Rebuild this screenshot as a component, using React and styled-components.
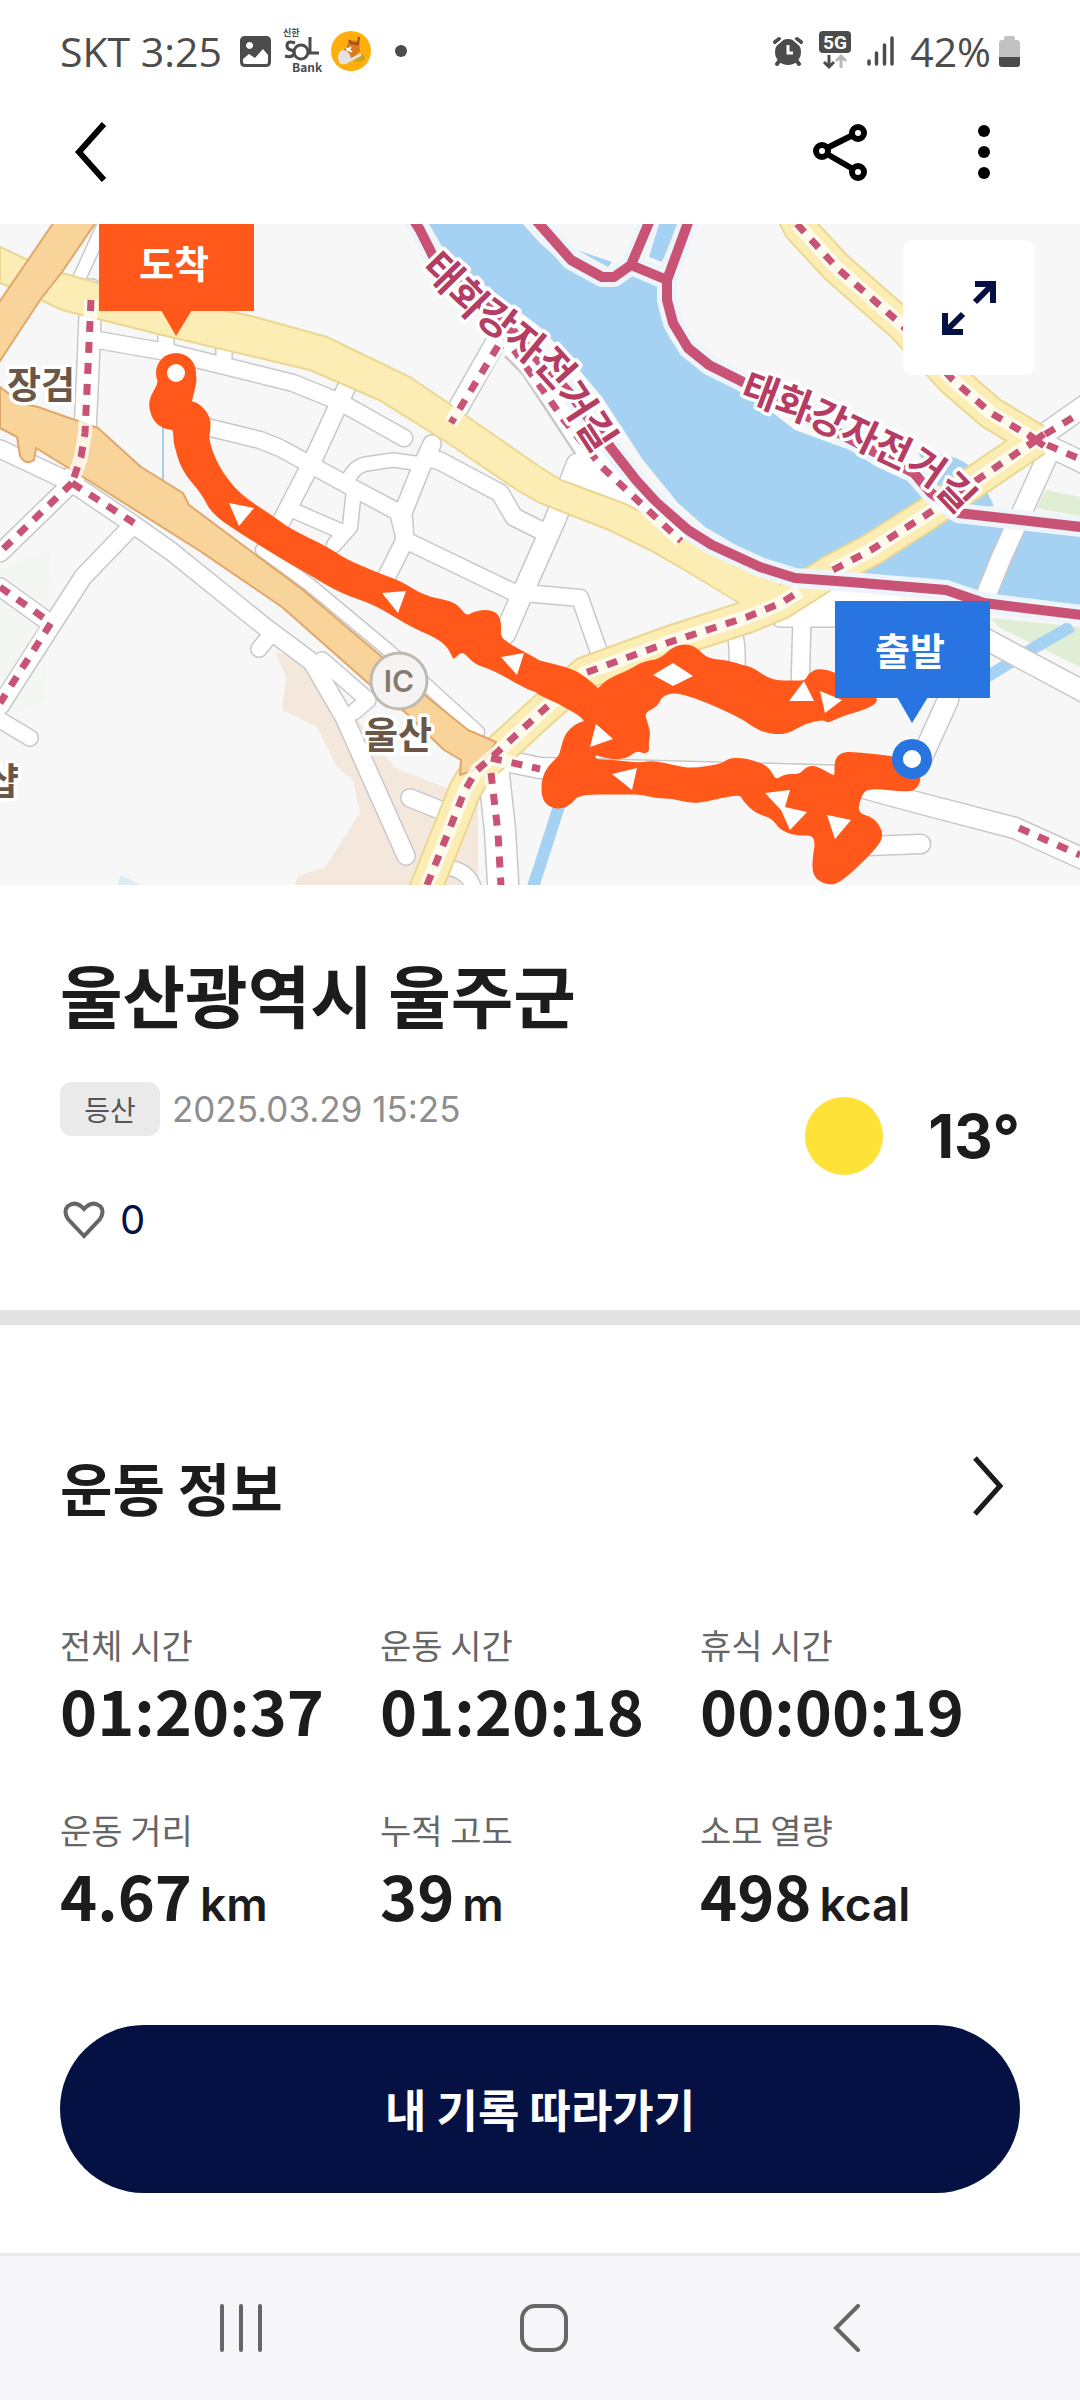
import React from "react";
import styled, { createGlobalStyle } from "styled-components";

const korean = '"Noto Sans CJK KR", sans-serif';
const latin = 'Inter, "Noto Sans CJK KR", sans-serif';

const GlobalStyle = createGlobalStyle`
  *, *::before, *::after { box-sizing: border-box; }
  body { margin: 0; background: #fff; color: #1c1c1c; font-family: ${korean}; }
  h1, h2, p, dl, dd { margin: 0; }
  svg { display: block; flex: none; }
`;

const Page = styled.div`
  min-height: 100vh;
  display: flex;
  flex-direction: column;
`;

/* ---------- status bar ---------- */

const StatusBar = styled.div`
  height: 102px;
  padding: 0 60px;
  display: flex;
  align-items: center;
  justify-content: space-between;
  color: #4c4c4c;
`;

const StatusGroup = styled.div`
  display: flex;
  align-items: center;
  gap: ${(p) => p.$gap}px;
`;

const StatusText = styled.span`
  font: 400 41px/54px "Open Sans", sans-serif;
  white-space: nowrap;
`;

const Carrier = styled(StatusText)`
  margin-right: 10px;
`;

const Dot = styled.span`
  width: 12px;
  height: 12px;
  margin-left: 16px;
  border-radius: 50%;
  background: currentColor;
`;

/* ---------- app bar ---------- */

const AppBar = styled.header`
  height: 122px;
  padding: 0 54px 22px 49px;
  display: flex;
  align-items: center;
`;

const IconButton = styled.button`
  width: 84px;
  height: 84px;
  padding: 0;
  border: 0;
  background: none;
  color: inherit;
  display: grid;
  place-items: center;
  cursor: pointer;
`;

const Actions = styled.div`
  margin-left: auto;
  display: flex;
  gap: 60px;
  color: #000;
`;

/* ---------- map ---------- */

const MapFrame = styled.section`
  position: relative;
  overflow: hidden;
  background: #f7f7f7;
`;

const MapSvg = styled.svg`
  width: 100%;
  height: auto;
`;

const ExpandButton = styled.button`
  position: absolute;
  top: 16px;
  right: 45px;
  width: 132px;
  height: 135px;
  padding: 0;
  border: 0;
  border-radius: 10px;
  background: #fff;
  color: #061143;
  display: grid;
  place-items: center;
  cursor: pointer;
`;

/* ---------- summary ---------- */

const Summary = styled.section`
  padding: 67px 60px 66px;
`;

const Title = styled.h1`
  margin-bottom: 46px;
  font-size: 68px;
  font-weight: 700;
  line-height: 84px;
`;

const SummaryRow = styled.div`
  display: flex;
  justify-content: space-between;
`;

const SummaryColumn = styled.div`
  display: flex;
  flex-direction: column;
  align-items: flex-start;
  gap: 60px;
`;

const Meta = styled.div`
  display: flex;
  align-items: center;
  gap: 12px;
`;

const Tag = styled.span`
  width: 100px;
  height: 54px;
  border-radius: 12px;
  background: #eaeaea;
  color: #555;
  font-size: 28px;
  line-height: 54px;
  text-align: center;
`;

const DateText = styled.time`
  color: #8e8e8e;
  font: 400 35px/48px ${latin};
`;

const LikeButton = styled.button`
  height: 48px;
  padding: 0 0 0 3px;
  border: 0;
  background: none;
  color: #061143;
  display: flex;
  align-items: center;
  gap: 15px;
  font: 400 40px/48px ${latin};
  cursor: pointer;
`;

const Weather = styled.div`
  height: 84px;
  margin-top: 12px;
  display: flex;
  align-items: center;
  gap: 45px;
`;

const Sun = styled.span`
  width: 78px;
  height: 78px;
  border-radius: 50%;
  background: #fee237;
`;

const Temperature = styled.span`
  font: 700 60px/84px ${latin};
`;

const Divider = styled.hr`
  width: 100%;
  height: 15px;
  margin: 0;
  border: 0;
  background: #e2e2e2;
`;

/* ---------- workout ---------- */

const Workout = styled.section`
  padding: 129px 60px 60px;
`;

const SectionHead = styled.div`
  height: 64px;
  margin-bottom: 105px;
  display: flex;
  align-items: center;
  justify-content: space-between;
`;

const SectionTitle = styled.h2`
  font-size: 57px;
  font-weight: 700;
  line-height: 64px;
`;

const MoreButton = styled(IconButton)`
  width: 64px;
  height: 64px;
`;

const Stats = styled.dl`
  display: grid;
  grid-template-columns: repeat(3, 1fr);
  row-gap: 63px;
`;

const Stat = styled.div`
  display: flex;
  flex-direction: column;
  gap: 6px;
`;

const StatLabel = styled.dt`
  color: #666;
  font-size: 34px;
  line-height: 44px;
`;

const StatValue = styled.dd`
  height: 72px;
  display: flex;
  align-items: baseline;
  gap: 8px;
  font-size: 63px;
  font-weight: 700;
  line-height: 72px;
  white-space: nowrap;
`;

const Unit = styled.span`
  font: 600 46px/72px ${latin};
`;

const FollowButton = styled.button`
  width: 100%;
  height: 168px;
  margin-top: 95px;
  border: 0;
  border-radius: 84px;
  background: #061143;
  color: #fff;
  font: 700 45px/64px ${korean};
  cursor: pointer;
`;

/* ---------- system navigation ---------- */

const SystemNav = styled.nav`
  height: 147px;
  margin-top: auto;
  padding: 0 82px 0 90px;
  border-top: 3px solid #e8e9ea;
  background: #f6f6f9;
  color: #666;
  display: grid;
  grid-template-columns: repeat(3, 1fr);
  align-items: center;
  justify-items: center;
`;

/* ---------- map data ---------- */

const streets = [
  { d: "M98 340 L172 353 L293 383 L340 402 L404 438", w: 16 },
  { d: "M166 322 V350 M224 340 V364", w: 15 },
  { d: "M207 427 L260 440 L280 448 L353 488 L398 512 L405 540 L513 592 L580 598 L600 655", w: 16 },
  { d: "M347 386 L313 460 L280 524", w: 17 },
  { d: "M432 444 L420 470 L403 513 L405 540 L384 582", w: 17 },
  { d: "M347 482 Q354 466 366 464 L393 460 L422 464", w: 13 },
  { d: "M354 490 L350 527 L334 545 M290 509 L345 533", w: 14 },
  { d: "M430 458 L440 461 L500 493 L514 517 L546 533", w: 17 },
  { d: "M577 464 L555 520 L523 592 L505 634", w: 20 },
  { d: "M91 290 L88 367 L85 433 L81 457 L72 483", w: 21 },
  { d: "M0 449 L72 483 L134 525 L172 552 L265 627 L312 662 L344 717 L406 856", w: 17 },
  { d: "M72 483 L0 553", w: 17 },
  { d: "M131 527 L83 577 L52 625 L0 706 M0 587 L50 623", w: 17 },
  { d: "M0 720 L30 738", w: 15 },
  { d: "M272 633 L259 649", w: 15 },
  { d: "M322 660 L368 700 L354 712", w: 15 },
  { d: "M410 798 L450 814", w: 17 },
  { d: "M74 290 L104 224", w: 12 },
  { d: "M262 550 L310 585 L388 650 L478 732", w: 12 },
  { d: "M494 345 L448 426", w: 19 },
  { d: "M491 758 L540 768 L843 776 L864 788 L919 803 L1015 828 L1090 862", w: 20 },
  { d: "M493 766 L500 830 L504 900", w: 30 },
  { d: "M450 868 Q474 872 476 900", w: 14 },
  { d: "M734 634 Q738 640 737 672", w: 15 },
  { d: "M802 618 L800 690 M780 618 H850", w: 17 },
  { d: "M980 636 L1090 695", w: 20 },
  { d: "M948 700 L918 766", w: 20 },
  { d: "M868 846 L921 844", w: 18 },
  { d: "M1048 455 L1002 556 L980 610", w: 19 },
  { d: "M1036 440 L1090 402 M1036 440 L1090 466", w: 20 },
];

const bikeLanes = [
  "M91 300 L88 367 L85 433 L81 457 L72 483",
  "M72 483 L0 552",
  "M72 483 L134 523",
  "M0 587 L51 623 L0 703",
  "M498 346 L451 423",
  "M514 350 L545 393 L564 420 L602 467 L681 541",
  "M491 758 L540 769",
  "M491 773 L498 833 L501 886",
  "M1019 828 L1080 855",
  "M427 885 L448 833 L465 790 L477 770 L491 758 L540 713 L585 673 L667 643 L747 617 L781 603 L800 591",
  "M833 570 L871 550 L926 515 L977 480 L1036 440 L1080 413",
  "M797 224 L836 267 L902 325 L953 380 L991 413 L1036 440 L1080 459",
];

const yellowRoads = [
  "M415 915 L448 833 L465 790 L477 770 L491 758 L540 713 L585 673 L667 643 L747 617 L781 603 L833 570 L871 550 L926 515 L977 480 L1036 440",
  "M788 205 L800 228 L836 267 L902 325 L953 380 L991 413 L1036 440",
];

const riverPaths = [
  "M411 216 L420 230 L434 258 L500 318 L572 396 L611 448 L636 480 L657 503 L688 530 L712 545 L760 567 L795 578 L850 582 L946 590 L984 603 L1090 616",
  "M534 218 L571 260 L602 277 L614 277 L631 265 L667 280 M650 220 L631 265",
  "M689 220 L667 280 L667 300 L673 323 L688 348 L709 365 L745 383 L914 473 L931 493 L958 513 L1090 528",
];

const track = [
  "160,373 159,385 152,396 150,407 155,421 166,428 174,428 175,436 175,443 183,470 203,493 213,513 241,532 286,560 306,571 341,592 375,603 410,625 434,635 448,645 454,657 454,657 463,649 475,663 492,668 517,682 540,694 560,680 540,662 527,655 507,644 499,637 500,625 497,614 486,611 474,613 466,618 457,606 448,602 424,597 399,582 379,575 344,560 327,548 289,530 272,517 238,495 217,467 207,440 209,430 209,418 200,406 190,402 190,402 195,383 195,373",
  "530,660 540,662 571,670 585,678 598,690 598,690 609,680 630,671 643,663 661,660 671,650 683,645 695,648 707,660 729,662 743,667 751,668 771,682 795,682 806,682 810,674 818,670 834,673 881,698 866,708 840,715 828,722 824,718 805,722 790,731 779,733 764,731 753,725 743,718 712,703 690,695 674,691 661,695 657,705 643,712 646,723 649,733 647,743 648,753 636,749 628,756 616,758 604,756 594,753 594,761 610,761 626,763 640,764 654,762 675,767 692,770 723,765 728,760 740,759 754,762 768,768 775,782 786,775 800,776 807,768 816,767 833,777 836,776 836,760 842,754 853,753 912,760 920,775 917,787 908,791 867,786 859,797 856,814 873,819 882,832 878,845 842,880 829,884 816,878 813,865 818,834 796,834 781,829 773,817 756,812 744,800 741,793 719,797 706,800 692,802 672,797 657,797 642,793 626,793 578,793 571,803 560,808 549,805 543,797 543,780 549,767 560,757 562,750 566,735 576,725 590,721 560,702 530,690",
];

const trackArrows = [
  "229,503 254,508 239,526",
  "382,593 406,591 398,613",
  "501,657 524,653 517,675",
  "653,675 673,663 693,676 673,686",
  "804,681 789,701 814,701",
  "820,691 842,700 825,713",
  "596,724 613,739 590,747",
  "612,774 637,768 632,790",
  "765,793 790,790 785,807 807,812 790,830 781,810",
  "827,815 851,820 835,839",
];

/* Rounds a ring of points by joining the midpoints of its edges with quadratic curves. */
function smoothRing(text) {
  const pts = text.split(" ").map((p) => p.split(",").map(Number));
  const mid = (a, b) => `${(a[0] + b[0]) / 2} ${(a[1] + b[1]) / 2}`;
  const start = mid(pts[pts.length - 1], pts[0]);
  const curves = pts.map((p, i) => `Q${p[0]} ${p[1]} ${mid(p, pts[(i + 1) % pts.length])}`);
  return `M${start} ${curves.join(" ")}Z`;
}

const MapLabel = styled.text`
  font-family: ${korean};
  font-size: ${(p) => p.$size || 37}px;
  font-weight: 600;
  fill: ${(p) => p.$color || "#6b5747"};
  stroke: #fff;
  stroke-width: 7px;
  stroke-linejoin: round;
  paint-order: stroke;
  text-anchor: ${(p) => p.$anchor || "middle"};
`;

const FlagLabel = styled.text`
  font-family: ${korean};
  font-size: 38px;
  font-weight: 700;
  fill: #fff;
  text-anchor: middle;
`;

const BadgeLabel = styled.text`
  font-family: ${latin};
  font-size: 30px;
  font-weight: 600;
  fill: #857a6d;
  text-anchor: middle;
`;

function Pin({ x, y, color, flagTop, flagHeight, label }) {
  const bottom = flagTop + flagHeight;
  return (
    <g>
      <rect x={x - 77} y={flagTop} width="155" height={flagHeight} fill={color} />
      <path d={`M${x - 15} ${bottom - 1} h31 L${x} ${bottom + 25} Z`} fill={color} />
      <circle cx={x} cy={y} r="20" fill={color} />
      <circle cx={x} cy={y} r="9" fill="#fff" />
      <FlagLabel x={x - 2} y={bottom - 33}>{label}</FlagLabel>
    </g>
  );
}

function RouteMap() {
  return (
    <MapSvg viewBox="0 224 1080 661" role="img" aria-label="울산광역시 울주군">
      <defs>
        <path id="lane-west" d="M420 269 L459 309 L491 333 L519 356 L544 377 Q556 390 564 408 L602 466" />
        <path id="lane-east" d="M739 398 L800 421 L890 464 Q932 478 972 534" />
      </defs>
      <rect y="224" width="1080" height="661" fill="#f7f7f7" />
      <path d="M0 570 L50 550 L44 700 L0 720Z" fill="#f4f6f3" />
      <path d="M275 652 L286 677 L282 710 L317 727 L337 767 L353 780 L360 813 L325 867 L298 876 L294 886 H478 V800 L395 768 L310 660Z" fill="#f4e8dd" />
      <path d="M121 875 L143 886 H117Z" fill="#deebf3" />
      <path d="M1046 490 L1080 497 V516 L1036 508Z M990 618 L1080 627 V667 L1000 628Z" fill="#e0eed5" />

      <g fill="#a5d2f3">
        <path d="M429 224 L444 250 L482 283 L540 327 L571 360 L602 397 L643 460 L678 503 L705 527 L753 555 L795 572 L902 580 L950 585 L981 597 L1080 609 V532 L953 518 L936 503 L912 483 L877 467 L850 450 L795 430 L747 393 L716 380 L692 363 L671 340 L659 310 L657 286 L633 274 L614 284 L599 284 L568 268 L540 243 L523 224Z" />
        <path d="M659 224 H678 L662 262 L649 257Z M577 250 L612 262 L608 267Z" />
        <path d="M918 452 Q960 452 978 474 L994 506 L950 510Z" />
      </g>
      <path d="M561 800 L545 850 L532 890" fill="none" stroke="#a5d2f3" strokeWidth="12" />
      <path d="M163 425 V480" stroke="#a8cfea" strokeWidth="2" />
      <path d="M1072 626 L1039 645 L985 678" fill="none" stroke="#a5d2f3" strokeWidth="12" />

      <g fill="none" strokeLinecap="round" strokeLinejoin="round">
        <path d="M506 357 L523 374 L577 456" stroke="#c8c8c8" strokeWidth="3" />
        {streets.map((s) => (
          <path key={s.d} d={s.d} stroke="#c8c8c8" strokeWidth={s.w + 3} />
        ))}
        {streets.map((s) => (
          <path key={s.d} d={s.d} stroke="#fff" strokeWidth={s.w} />
        ))}
      </g>
      <path d="M500 338 L508 357 L524 373 L578 456 L568 480 L623 506 L680 535 L728 552 L640 486 L560 380Z" fill="#fff" />
      <path d="M781 605 L850 584 L900 592 V622 H775Z" fill="#fff" />

      <path
        d="M0 247 L28 260 L62 273 L98 283 L255 317 L327 337 L410 377 L448 403 L540 467 L561 480 L623 503 L680 530 L733 553 L791 577 L778 602 L738 602 L688 572 L650 550 L609 530 L540 503 L517 490 L448 443 L379 400 L310 370 L162 335 L62 310 L41 300 L0 283Z"
        fill="#fbedb4" stroke="#ead791" strokeWidth="2"
      />
      <g fill="none" strokeLinejoin="round">
        {yellowRoads.map((d) => (
          <path key={d} d={d} stroke="#ead791" strokeWidth="34" />
        ))}
        {yellowRoads.map((d) => (
          <path key={d} d={d} stroke="#fbedb4" strokeWidth="30" />
        ))}
        <path d="M733 553 L781 577 L775 600 L745 606 L700 578Z" fill="#fbedb4" />
      </g>

      <g fill="#f8d39a" stroke="#e0a76a" strokeWidth="2" strokeLinejoin="round">
        <path d="M0 387 L21 403 L38 407 L98 428 L141 467 L183 493 L189 505 L248 549 L303 590 L382 657 L427 697 L468 730 L496 742 L480 768 L460 775 L461 760 L444 750 L406 713 L368 683 L282 607 L200 551 L83 477 L36 448 L34 460 Q26 466 20 456 L17 437 L0 428Z" />
        <path d="M54 222 H96 L62 272 L40 300 L-2 364 V304 L28 260Z" />
      </g>

      <g fill="none" strokeLinejoin="round">
        {riverPaths.map((d) => (
          <path key={d} d={d} stroke="#edf4fa" strokeWidth="20" />
        ))}
        {riverPaths.map((d) => (
          <path key={d} d={d} stroke="#c95375" strokeWidth="10" />
        ))}
        {bikeLanes.map((d) => (
          <path key={d} d={d} stroke="#fff" strokeOpacity="0.75" strokeWidth="14" />
        ))}
        {bikeLanes.map((d) => (
          <path key={d} d={d} stroke="#c95375" strokeWidth="7" strokeDasharray="11 10" />
        ))}
        <path d="M1028 434 L1044 446 M1028 446 L1044 434" stroke="#c95375" strokeWidth="7" />
      </g>

      <circle cx="399" cy="681" r="28" fill="#f5f4f2" stroke="#bfb9b1" strokeWidth="3" />
      <BadgeLabel x="399" y="692">IC</BadgeLabel>
      <MapLabel x="41" y="399">장검</MapLabel>
      <MapLabel x="398" y="749">울산</MapLabel>
      <MapLabel x="2" y="795">샵</MapLabel>
      <MapLabel $size={40} $color="#b53c62" $anchor="start"><textPath href="#lane-west">태화강자전거길</textPath></MapLabel>
      <MapLabel $size={39} $color="#b53c62" $anchor="start"><textPath href="#lane-east">태화강자전거길</textPath></MapLabel>

      <g fill="#ff581a" stroke="#ff581a" strokeWidth="3" strokeLinejoin="round">
        {track.map((points) => (
          <path key={points} d={smoothRing(points)} />
        ))}
      </g>
      <g fill="#fff">
        {trackArrows.map((points) => (
          <polygon key={points} points={points} />
        ))}
      </g>
      <Pin x={176} y={373} color="#ff581a" flagTop={214} flagHeight={97} label="도착" />
      <Pin x={912} y={759} color="#2875e2" flagTop={601} flagHeight={97} label="출발" />
    </MapSvg>
  );
}

/* ---------- icons ---------- */

const SolText = styled.text`
  font-family: ${korean};
  font-weight: 700;
  font-size: ${(p) => p.$size}px;
  fill: #4c4c4c;
`;

const ImageIcon = () => (
  <svg width="31" height="31" viewBox="0 0 31 31">
    <path fillRule="evenodd" fill="#4c4c4c" d="M5 0H26Q31 0 31 5V26Q31 31 26 31H5Q0 31 0 26V5Q0 0 5 0ZM3 23V26Q3 28 5 28H26Q28 28 28 26V19L23 13L15 22L9 18ZM9.500 6A3.500 3.500 0 1 0 9.600 6Z" />
  </svg>
);

const SolIcon = () => (
  <svg width="44" height="60" viewBox="-4 -8 44 60" aria-label="신한 SoL Bank">
    <SolText x="0" y="7" $size={9}>신한</SolText>
    <g fill="none" stroke="#4c4c4c" strokeWidth="3">
      <path d="M12 14Q4 11 4 17Q4 20 8 21Q12 22 11 25Q9 29 2 27" />
      <circle cx="18" cy="23" r="7" />
      <path d="M27 8V24H36" />
    </g>
    <SolText x="9" y="43" $size={12}>Bank</SolText>
  </svg>
);

const SneakerIcon = () => (
  <svg width="40" height="40" viewBox="0 0 40 40">
    <circle cx="20" cy="20" r="20" fill="#ffae0c" />
    <ellipse cx="28" cy="27" rx="6" ry="4" fill="#c9a417" />
    <path d="M9 22L16 15L18 9L28 10L29 20L24 25L12 33L7 30Z" fill="#d97a20" />
    <path d="M18 9L20 12L27 13L28 6" fill="none" stroke="#9e4a13" strokeWidth="2" />
    <path d="M7 26Q8 18 13 19Q19 21 20 27L30 22V25L15 33Q7 35 7 26Z" fill="#e5e2de" />
    <path d="M15 17L21 21M20 16L16 20" stroke="#fff" strokeWidth="2" />
  </svg>
);

const AlarmIcon = () => (
  <svg width="30" height="30" viewBox="0 0 30 30">
    <circle cx="15" cy="16" r="13" fill="#4c4c4c" />
    <g fill="none" stroke="#4c4c4c" strokeLinecap="round">
      <path d="M2 6L6 3M28 6L24 3M7 24L4 28M23 24L26 28" strokeWidth="4" />
    </g>
    <path d="M2 10L10 3M28 10L20 3" stroke="#fff" strokeWidth="2" />
    <path d="M15 9V17H20" fill="none" stroke="#fff" strokeWidth="3" />
  </svg>
);

const FiveGText = styled.text`
  font: 700 19px Roboto, sans-serif;
  fill: #fff;
  text-anchor: middle;
`;

const NetworkIcon = () => (
  <svg width="32" height="40" viewBox="0 0 32 40">
    <rect width="32" height="22" rx="4" fill="#4c4c4c" />
    <FiveGText x="16" y="18">5G</FiveGText>
    <path d="M10 24V36M5 31L10 36L15 31" fill="none" stroke="#4c4c4c" strokeWidth="3" />
    <path d="M22 37V25M17 30L22 25L27 30" fill="none" stroke="#b9b9b9" strokeWidth="3" />
  </svg>
);

const SignalIcon = () => (
  <svg width="27" height="30" viewBox="0 0 27 30">
    <path d="M2 25V28M9.500 17V28M17.500 9V28M25 2V28" stroke="#4c4c4c" strokeWidth="3.500" strokeLinecap="round" />
  </svg>
);

const BatteryIcon = () => (
  <svg width="21" height="31" viewBox="0 0 21 31">
    <path d="M5 4V2Q5 0 7 0H14Q16 0 16 2V4H18Q21 4 21 7V21H0V7Q0 4 3 4Z" fill="#c2c2c2" />
    <path d="M0 21H21V28Q21 31 18 31H3Q0 31 0 28Z" fill="#4c4c4c" />
  </svg>
);

const BackIcon = () => (
  <svg width="32" height="60" viewBox="0 0 32 60">
    <path d="M29 2L4 30L29 58" fill="none" stroke="#000" strokeWidth="6" />
  </svg>
);

const ShareIcon = () => (
  <svg width="54" height="58" viewBox="0 0 54 58" fill="none" stroke="currentColor" strokeWidth="6">
    <circle cx="9" cy="28" r="6" />
    <circle cx="45" cy="10" r="6" />
    <circle cx="45" cy="49" r="6" />
    <path d="M14 25L40 12M14 31L40 46" />
  </svg>
);

const MoreIcon = () => (
  <svg width="12" height="56" viewBox="0 0 12 56" fill="currentColor">
    <circle cx="6" cy="7" r="6" />
    <circle cx="6" cy="28" r="6" />
    <circle cx="6" cy="49" r="6" />
  </svg>
);

const ExpandIcon = () => (
  <svg width="54" height="56" viewBox="0 0 54 56" fill="none" stroke="currentColor" strokeWidth="6">
    <path d="M33 4H51V23M51 4L33 22" />
    <path d="M21 52H3V33M3 52L21 34" />
  </svg>
);

const HeartIcon = () => (
  <svg width="42" height="38" viewBox="0 0 42 38">
    <path d="M21 35L5 18Q0 10 5 5Q13 -1 21 8Q29 -1 37 5Q42 10 37 18Z" fill="none" stroke="#666" strokeWidth="4" />
  </svg>
);

const ForwardIcon = () => (
  <svg width="32" height="60" viewBox="0 0 32 60">
    <path d="M3 2L28 30L3 58" fill="none" stroke="#1c1c1c" strokeWidth="5" />
  </svg>
);

const RecentsIcon = () => (
  <svg width="44" height="48" viewBox="0 0 44 48">
    <path d="M3 2V46M22 2V46M41 2V46" stroke="currentColor" strokeWidth="4" strokeLinecap="round" />
  </svg>
);

const HomeIcon = () => (
  <svg width="48" height="48" viewBox="0 0 48 48">
    <rect x="2" y="2" width="44" height="44" rx="13" fill="none" stroke="currentColor" strokeWidth="4" />
  </svg>
);

const NavBackIcon = () => (
  <svg width="28" height="48" viewBox="0 0 28 48">
    <path d="M25 2L3 24L25 46" fill="none" stroke="currentColor" strokeWidth="4" strokeLinecap="round" />
  </svg>
);

const stats = [
  { label: "전체 시간", value: "01:20:37" },
  { label: "운동 시간", value: "01:20:18" },
  { label: "휴식 시간", value: "00:00:19" },
  { label: "운동 거리", value: "4.67", unit: "km" },
  { label: "누적 고도", value: "39", unit: "m" },
  { label: "소모 열량", value: "498", unit: "kcal" },
];

export default function App() {
  return (
    <Page>
      <GlobalStyle />
      <StatusBar>
        <StatusGroup $gap={8}>
          <Carrier>SKT 3:25</Carrier>
          <ImageIcon />
          <SolIcon />
          <SneakerIcon />
          <Dot />
        </StatusGroup>
        <StatusGroup $gap={16}>
          <AlarmIcon />
          <NetworkIcon />
          <SignalIcon />
          <StatusGroup $gap={8}>
            <StatusText>42%</StatusText>
            <BatteryIcon />
          </StatusGroup>
        </StatusGroup>
      </StatusBar>

      <AppBar>
        <IconButton aria-label="뒤로"><BackIcon /></IconButton>
        <Actions>
          <IconButton aria-label="공유"><ShareIcon /></IconButton>
          <IconButton aria-label="더보기"><MoreIcon /></IconButton>
        </Actions>
      </AppBar>

      <MapFrame>
        <RouteMap />
        <ExpandButton aria-label="지도 확대"><ExpandIcon /></ExpandButton>
      </MapFrame>

      <Summary>
        <Title>울산광역시 울주군</Title>
        <SummaryRow>
          <SummaryColumn>
            <Meta>
              <Tag>등산</Tag>
              <DateText dateTime="2025-03-29T15:25">2025.03.29 15:25</DateText>
            </Meta>
            <LikeButton aria-label="좋아요 0">
              <HeartIcon />
              0
            </LikeButton>
          </SummaryColumn>
          <Weather>
            <Sun />
            <Temperature>13°</Temperature>
          </Weather>
        </SummaryRow>
      </Summary>

      <Divider />

      <Workout>
        <SectionHead>
          <SectionTitle>운동 정보</SectionTitle>
          <MoreButton aria-label="운동 정보 더보기"><ForwardIcon /></MoreButton>
        </SectionHead>
        <Stats>
          {stats.map((s) => (
            <Stat key={s.label}>
              <StatLabel>{s.label}</StatLabel>
              <StatValue>
                {s.value}
                {s.unit && <Unit>{s.unit}</Unit>}
              </StatValue>
            </Stat>
          ))}
        </Stats>
        <FollowButton>내 기록 따라가기</FollowButton>
      </Workout>

      <SystemNav>
        <IconButton aria-label="최근 앱"><RecentsIcon /></IconButton>
        <IconButton aria-label="홈"><HomeIcon /></IconButton>
        <IconButton aria-label="이전"><NavBackIcon /></IconButton>
      </SystemNav>
    </Page>
  );
}
